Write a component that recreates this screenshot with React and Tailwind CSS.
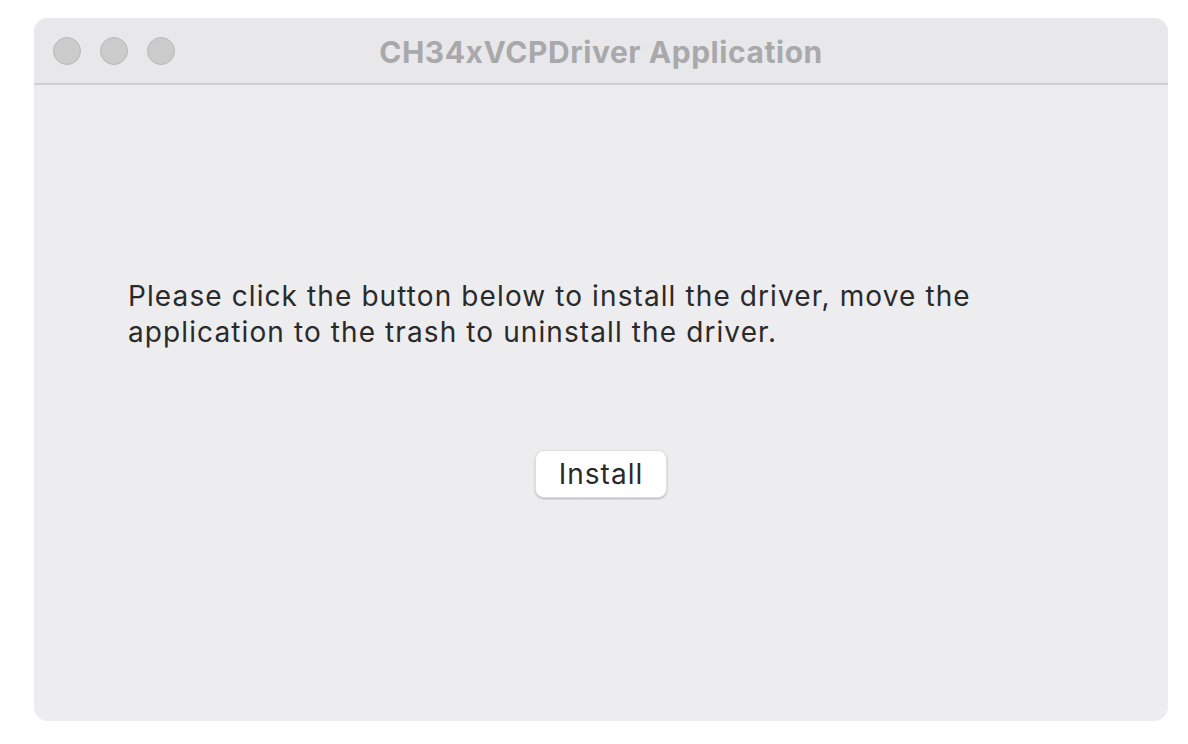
export default function App() {
    return (
        <div className="w-[1188px] h-[744px] bg-white pt-[18px] pl-[34px]" style={{ fontFamily: 'Inter, "Noto Sans", sans-serif' }}>
            <div className="w-[1134px] h-[703px] rounded-[14px] bg-[#ededef] overflow-hidden flex flex-col">
                <div className="h-[67px] bg-[#e8e8ea] border-b-2 border-[#cfcfd1] flex items-center relative">
                    <div className="flex gap-[19px] pl-[19px]">
                        <span className="w-[28px] h-[28px] rounded-full bg-[#cbcbcb] border border-[#b8b8b8]"></span>
                        <span className="w-[28px] h-[28px] rounded-full bg-[#cbcbcb] border border-[#b8b8b8]"></span>
                        <span className="w-[28px] h-[28px] rounded-full bg-[#cbcbcb] border border-[#b8b8b8]"></span>
                    </div>
                    <div className="absolute inset-0 flex items-center justify-center pt-[3px]">
                        <h1 className="text-[30px] font-bold text-[#a9a9ab] tracking-[0.55px]">CH34xVCPDriver Application</h1>
                    </div>
                </div>
                <div className="flex-1 flex flex-col">
                    <p className="mt-[193px] pl-[94px] text-[28px] leading-[36px] text-[#2a2a2a] tracking-[1.1px] w-[1000px]">
                        Please click the button below to install the driver, move the<br />application to the trash to uninstall the driver.
                    </p>
                    <div className="flex justify-center mt-[100px]">
                        <button className="w-[132px] h-[48px] bg-white rounded-[9px] text-[28px] text-[#2a2a2a] tracking-[1px] shadow-[0_1px_2px_rgba(0,0,0,0.25)] border border-[#e0e0e0]">Install</button>
                    </div>
                </div>
            </div>
        </div>
    );
}
